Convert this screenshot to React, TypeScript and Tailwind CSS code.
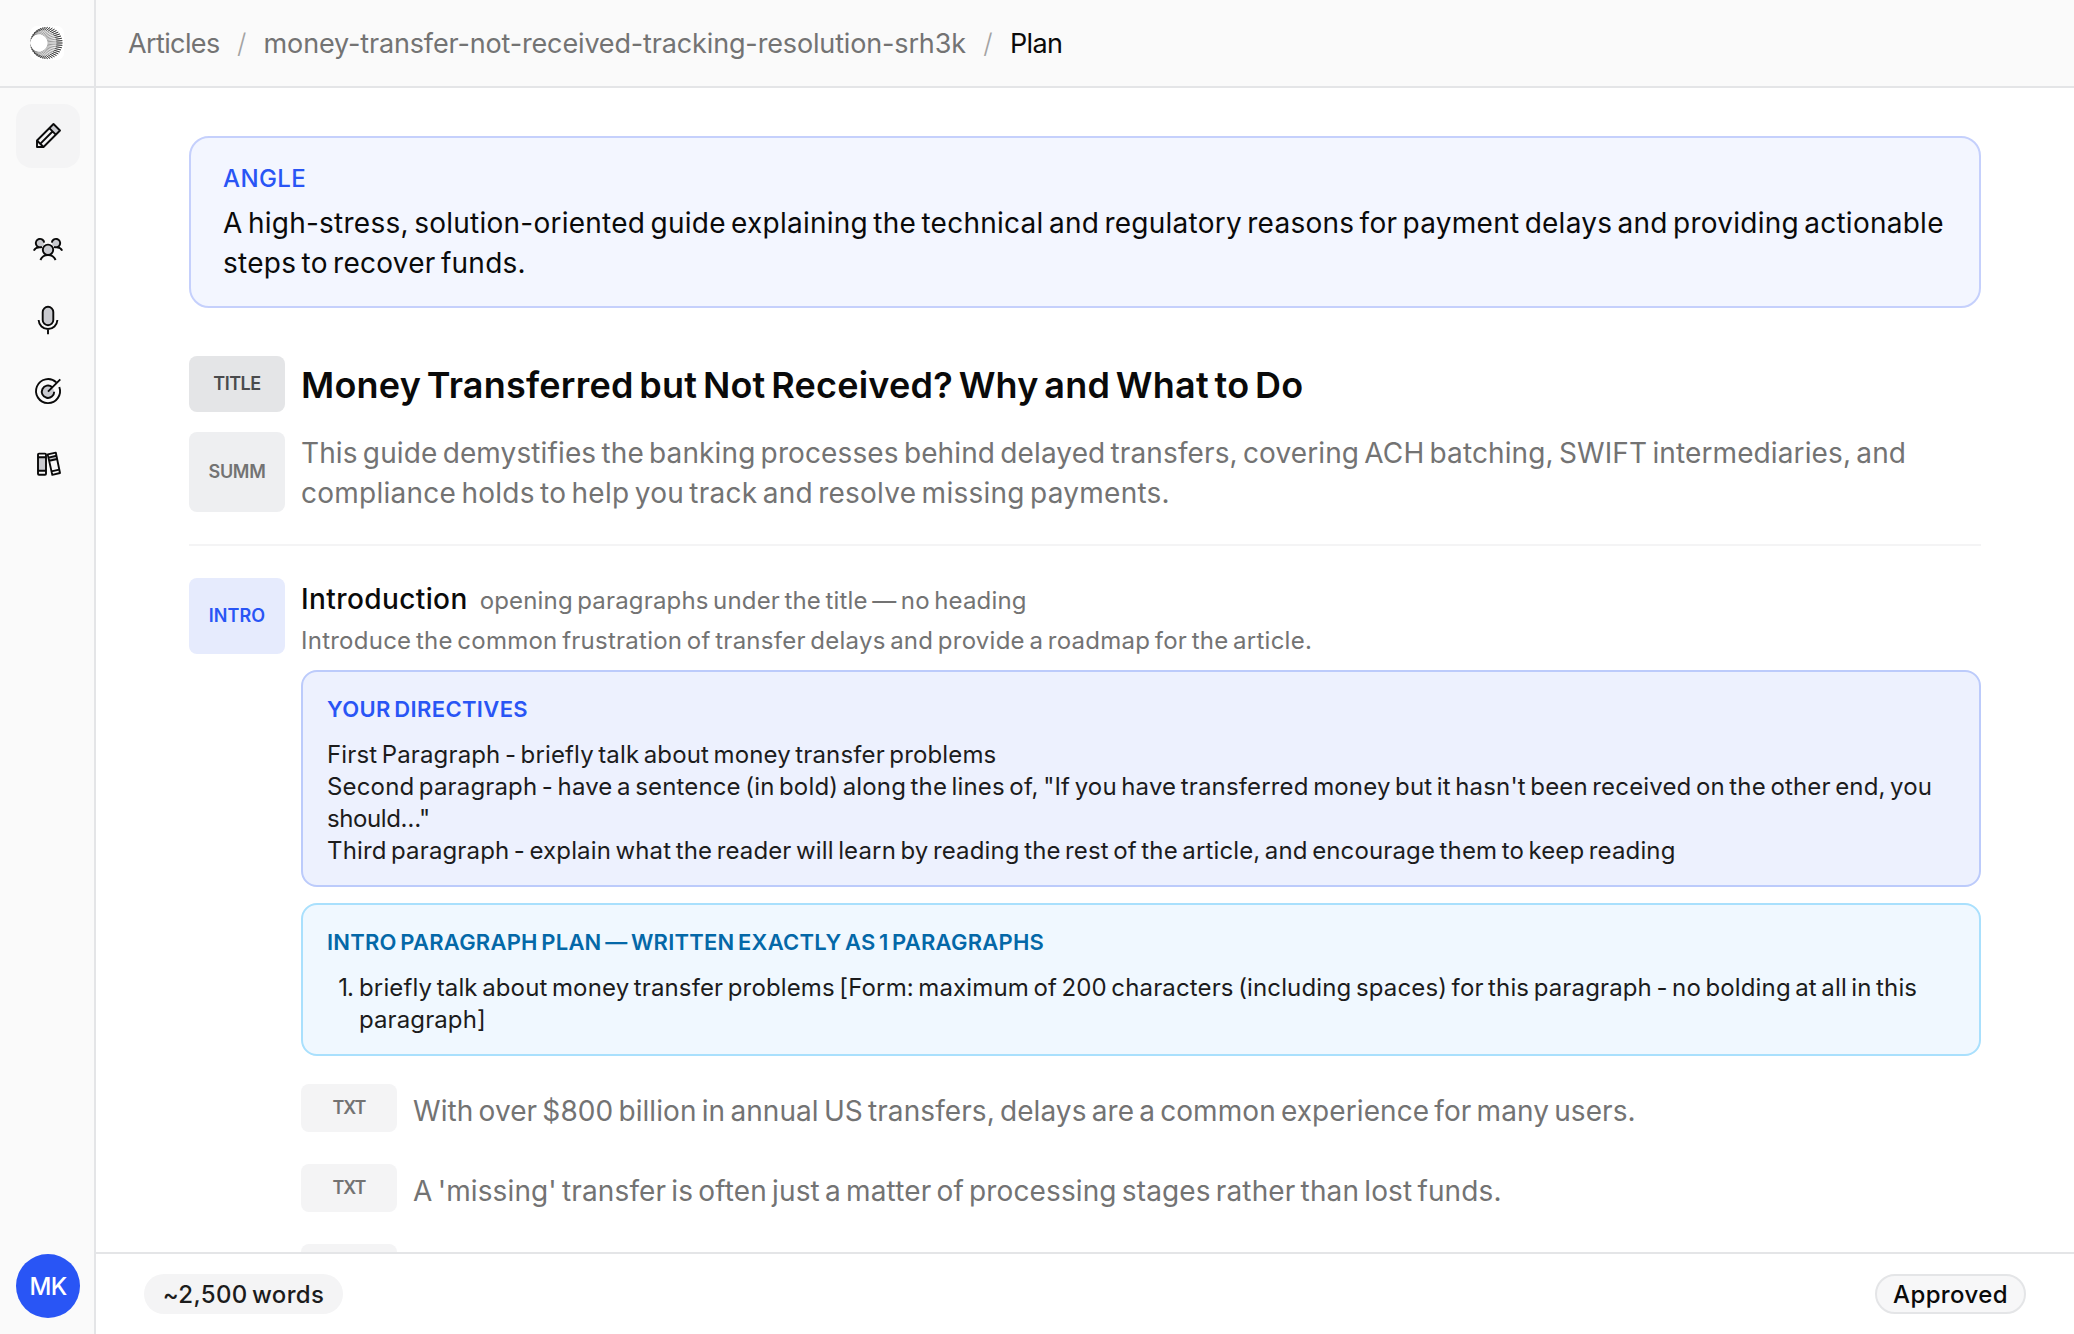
import React from 'react';
import clsx from 'clsx';

const GREY = '#c9cacf';

const Icon = ({ children }: { children: React.ReactNode }) => (
  <svg width="32" height="32" viewBox="0 0 32 32" fill="none" stroke="#0a0a0a" strokeWidth="1.9" strokeLinejoin="round">
    {children}
  </svg>
);

const Logo = () => {
  const rays = Array.from({ length: 42 }, (_, i) => {
    const a = (i / 42) * Math.PI * 2;
    const cos = Math.cos(a);
    const sin = Math.sin(a);
    return {
      x1: 16.5 + cos * 16, y1: 17 + sin * 16,
      xm: 13.6 + cos * 12.8, ym: 17 + sin * 12.8,
      x2: 9 + cos * 8.5, y2: 17 + sin * 8.5,
    };
  });

  return (
    <svg width="34" height="34" viewBox="0 0 34 34">
      <rect width="34" height="34" rx="7" fill="#fff" />
      {rays.map((r, i) => (
        <g key={i} stroke="#222">
          <line x1={r.x1} y1={r.y1} x2={r.x2} y2={r.y2} strokeWidth="0.45" />
          <line x1={r.x1} y1={r.y1} x2={r.xm} y2={r.ym} strokeWidth="0.8" />
        </g>
      ))}
      <circle cx="8.8" cy="17" r="8.4" fill="#fff" />
    </svg>
  );
};

const PencilIcon = () => (
  <Icon>
    <path d="M17.3 8.2 21.5 4 28 10.5l-4.2 4.2z" fill={GREY} stroke="none" />
    <path d="M5 20.5 21.5 4 28 10.5 11.5 27H5z" />
    <path d="M17.3 8.2l6.5 6.5M5 20.5l6.5 6.5M8.2 23.8 20.5 11.5" />
  </Icon>
);

const PeopleIcon = () => (
  <Icon>
    <circle cx="8" cy="11" r="3.9" fill={GREY} stroke="none" />
    <circle cx="24" cy="11" r="3.9" fill={GREY} stroke="none" />
    <path d="M10 14.8A4.2 4.2 0 1 1 12.2 10.6M22 14.8a4.2 4.2 0 1 0-2.2-4.2" />
    <path d="M1.8 18.6c1-1.9 2.8-3.2 5.2-3.4M30.2 18.6c-1-1.9-2.8-3.2-5.2-3.4" />
    <circle cx="16" cy="17.8" r="5.2" fill={GREY} />
    <path d="M8.4 28c1.3-3 4.2-5 7.6-5s6.3 2 7.6 5" />
  </Icon>
);

const MicIcon = () => (
  <Icon>
    <rect x="10.7" y="2.8" width="10.6" height="18.4" rx="5.3" fill={GREY} />
    <path d="M6.6 16c.3 5.2 4.4 9 9.4 9s9.1-3.8 9.4-9M16 25v5.2" />
  </Icon>
);

const TargetIcon = () => (
  <Icon>
    <circle cx="16" cy="15.7" r="6" fill={GREY} stroke="none" />
    <path d="M24.3 6.4a12 12 0 1 0 3 4.6" />
    <path d="M20 11a6.2 6.2 0 1 0 2.2 4.7M16 15.7 28.3 3.4" />
  </Icon>
);

const BooksIcon = () => (
  <Icon>
    <path d="M6 8.7h8v14H6zM16.6 9.5l8.5-1.8.7 3.3-8.5 1.8z" fill={GREY} stroke="none" />
    <rect x="6" y="5.6" width="8" height="21.2" rx="1" />
    <path d="M6 9.3h8M6 22.7h8" />
    <path d="M15.7 6.4 23.8 4.6 28 25l-7.7 1.9zM16.6 9.6l7.9-1.8M17.3 12.8l7.8-1.8M19.5 23.4l7.7-1.8" />
  </Icon>
);

const navItems = [PeopleIcon, MicIcon, TargetIcon, BooksIcon];

const Line = ({ className, children }: { className?: string; children: React.ReactNode }) => (
  <span className={clsx('block whitespace-nowrap', className)}>{children}</span>
);

const Tag = ({ className, children }: { className?: string; children?: React.ReactNode }) => (
  <div className={clsx('flex w-24 shrink-0 items-center justify-center rounded-lg text-[18px] leading-none font-semibold', className)}>
    {children}
  </div>
);

const Sidebar = () => (
  <aside className="flex w-24 shrink-0 flex-col items-center border-r-2 border-[#e4e5e7] bg-[#fafafa]">
    <div className="flex h-[88px] w-full items-center justify-center border-b-2 border-[#e4e5e7]">
      <Logo />
    </div>
    <nav className="flex flex-1 flex-col pt-4 pl-0.5">
      <button className="flex size-16 items-center justify-center rounded-2xl bg-[#f4f4f5]">
        <PencilIcon />
      </button>
      <div className="mt-12 flex flex-col gap-2">
        {navItems.map((NavIcon, i) => (
          <button key={i} className="flex size-16 items-center justify-center">
            <NavIcon />
          </button>
        ))}
      </div>
    </nav>
    <div className="mb-4 ml-0.5 flex size-16 items-center justify-center rounded-full bg-[#2955f5] pt-0.5 text-[24px] font-medium tracking-[-0.8px] text-white">
      MK
    </div>
  </aside>
);

const Header = () => (
  <header className="flex h-[88px] shrink-0 items-center border-b-2 border-[#e4e5e7] bg-[#fafafa] pt-0.5 pl-8 text-[27px] whitespace-nowrap text-[#737373]">
    <span className="tracking-[-0.62px]">Articles</span>
    <span className="w-11 text-center font-light text-[#a3a3a3]">/</span>
    <span className="tracking-[-0.15px]">money-transfer-not-received-tracking-resolution-srh3k</span>
    <span className="w-11 text-center font-light text-[#a3a3a3]">/</span>
    <span className="tracking-[-0.6px] text-[#0a0a0a]">Plan</span>
  </header>
);

const Footer = () => (
  <footer className="absolute inset-x-0 bottom-0 flex h-[82px] items-center justify-between border-t-2 border-[#e4e5e7] bg-white/95 px-12 text-[24px] leading-none font-medium">
    <span className="flex h-10 w-[199px] items-center justify-center rounded-full bg-[#f4f4f5] pt-0.5 tracking-[0.35px] whitespace-nowrap text-[#1c1c1c]">
      ~2,500 words
    </span>
    <span className="flex h-10 w-[151px] items-center justify-center rounded-full border-2 border-[#e4e5e7] bg-[#f7f7f8] pt-0.5 tracking-[0.4px] text-[#0a0a0a]">
      Approved
    </span>
  </footer>
);

const App = () => {
  return (
    <div className="flex h-[1334px] w-full overflow-hidden bg-white font-['Inter',sans-serif] **:[word-spacing:-0.1em]">
      <Sidebar />

      <div className="relative flex min-w-0 flex-1 flex-col overflow-hidden">
        <Header />

        <main className="mx-auto w-full max-w-[1792px] flex-1 pt-12">
          <section className="rounded-[20px] border-2 border-[#c5d0fc] bg-[#f3f6ff] px-8 pt-[25px] pb-[23px]">
            <h2 className="text-[24px] leading-8 font-medium tracking-[0.4px] text-[#2955f5]">ANGLE</h2>
            <p className="mt-2 text-[28px] leading-10 text-[#0a0a0a]">
              <Line className="tracking-[0.25px]">A high-stress, solution-oriented guide explaining the technical and regulatory reasons for payment delays and providing actionable</Line>
              <Line className="tracking-[0.26px]">steps to recover funds.</Line>
            </p>
          </section>

          <div className="mt-12 flex gap-4">
            <Tag className="h-14 bg-[#e4e5e7] tracking-[-0.5px] text-[#4a4b4d]">TITLE</Tag>
            <h1 className="h-14 text-[36px] leading-[58px] font-semibold tracking-[0.22px] whitespace-nowrap text-[#0a0a0a]">
              Money Transferred but Not Received? Why and What to Do
            </h1>
          </div>

          <div className="mt-5 flex gap-4 border-b-2 border-[#f4f4f5] pb-8">
            <Tag className="h-20 bg-[#eeeff1] tracking-[-0.3px] text-[#737373]">SUMM</Tag>
            <p className="h-20 pt-px text-[28px] leading-10 text-[#737373]">
              <Line className="tracking-[0.12px]">This guide demystifies the banking processes behind delayed transfers, covering ACH batching, SWIFT intermediaries, and</Line>
              <Line className="tracking-[0.25px]">compliance holds to help you track and resolve missing payments.</Line>
            </p>
          </div>

          <div className="mt-8 flex gap-4">
            <Tag className="h-[76px] bg-[#e6ebfd] tracking-[0.1px] text-[#2955f5]">INTRO</Tag>
            <div className="h-[76px] pt-px whitespace-nowrap text-[#737373]">
              <div className="flex items-baseline gap-3 text-[24px] leading-10">
                <h3 className="text-[28px] font-medium tracking-[0.4px] text-[#0a0a0a]">Introduction</h3>
                <span className="tracking-[0.16px]">opening paragraphs under the title — no heading</span>
              </div>
              <p className="mt-1 text-[24px] leading-8 tracking-[0.25px]">
                Introduce the common frustration of transfer delays and provide a roadmap for the article.
              </p>
            </div>
          </div>

          <div className="mt-4 flex flex-col gap-4 pl-28">
            <section className="rounded-2xl border-2 border-[#bccbfb] bg-[#edf1fe] px-6 pt-[23px] pb-[19px]">
              <h4 className="text-[22px] leading-7 font-semibold tracking-[0.35px] text-[#2955f5]">YOUR DIRECTIVES</h4>
              <p className="mt-4 -mb-px text-[24px] leading-8 text-[#1c1c1c]">
                <Line className="tracking-[0.14px]">First Paragraph - briefly talk about money transfer problems</Line>
                <Line className="tracking-[0.16px]">Second paragraph - have a sentence (in bold) along the lines of, "If you have transferred money but it hasn't been received on the other end, you</Line>
                <Line className="tracking-[-0.4px]">should…"</Line>
                <Line className="tracking-[0.14px]">Third paragraph - explain what the reader will learn by reading the rest of the article, and encourage them to keep reading</Line>
              </p>
            </section>

            <section className="rounded-2xl border-2 border-[#a9e0fd] bg-[#f0f8ff] px-6 pt-[23px] pb-[19px]">
              <h4 className="text-[22px] leading-7 font-semibold tracking-[0.23px] text-[#0468a8]">
                INTRO PARAGRAPH PLAN — WRITTEN EXACTLY AS 1 PARAGRAPHS
              </h4>
              <div className="mt-4 -mb-px flex text-[24px] leading-8 text-[#1c1c1c]">
                <span className="w-8 pr-1.5 text-right tracking-[-1px]">1.</span>
                <p>
                  <Line className="tracking-[0.14px]">briefly talk about money transfer problems [Form: maximum of 200 characters (including spaces) for this paragraph - no bolding at all in this</Line>
                  <Line className="tracking-[0.1px]">paragraph]</Line>
                </p>
              </div>
            </section>
          </div>

          <ul className="mt-7 flex flex-col gap-8 pl-28 text-[28px] text-[#737373]">
            <li className="flex h-12 gap-4">
              <Tag className="bg-[#f4f4f5] tracking-[-1px]">TXT</Tag>
              <Line className="leading-[54px] tracking-[0.08px]">With over $800 billion in annual US transfers, delays are a common experience for many users.</Line>
            </li>
            <li className="flex h-12 gap-4">
              <Tag className="bg-[#f4f4f5] tracking-[-1px]">TXT</Tag>
              <Line className="leading-[54px] tracking-[0.12px]">A 'missing' transfer is often just a matter of processing stages rather than lost funds.</Line>
            </li>
            <li className="flex h-12 gap-4">
              <Tag className="bg-[#f4f4f5]" />
            </li>
          </ul>
        </main>

        <Footer />
      </div>
    </div>
  );
};

export default App;
